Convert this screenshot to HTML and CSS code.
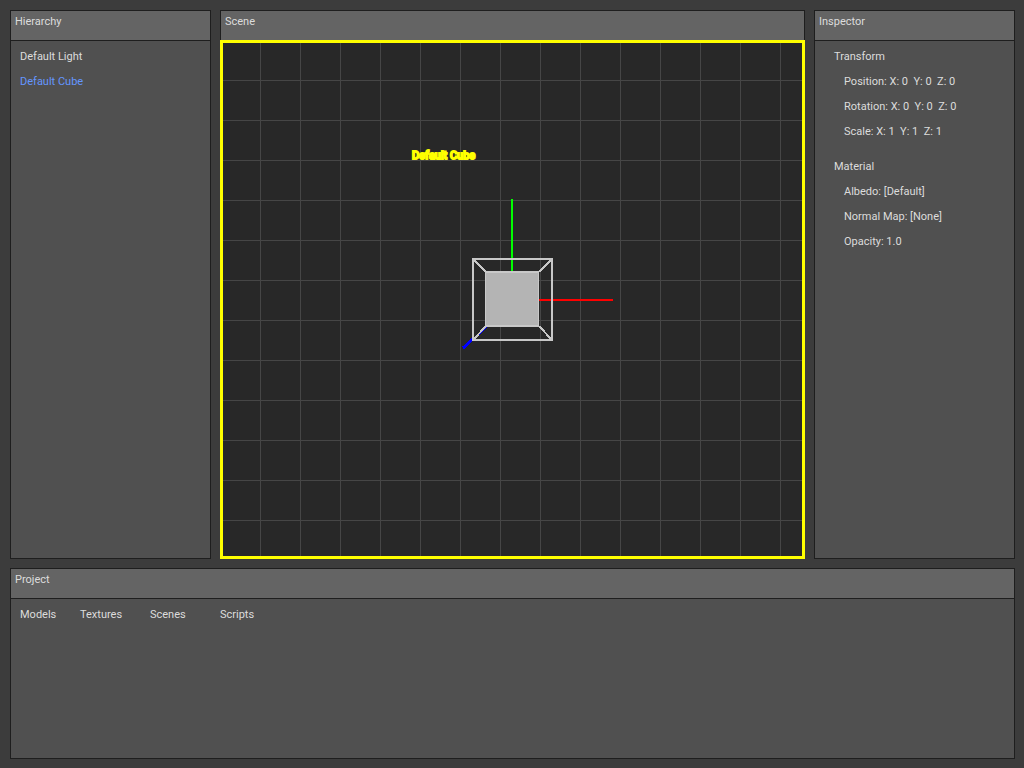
FILE: index.html
```html
<!DOCTYPE html>
<html lang="en">
<head>
<meta charset="utf-8">
<title>Scene Editor</title>
<link rel="stylesheet" href="styles.css">
</head>
<body>
<main class="editor">
  <section class="panel" aria-labelledby="hierarchy-title">
    <h2 class="panel-title" id="hierarchy-title">Hierarchy</h2>
    <ul class="item-list">
      <li>Default Light</li>
      <li class="selected">Default Cube</li>
    </ul>
  </section>
  <section class="panel scene" aria-labelledby="scene-title">
    <h2 class="panel-title" id="scene-title">Scene</h2>
    <div class="viewport">
      <svg class="model" width="241" height="319" viewBox="-120 -160 241 319" role="img" aria-label="Default Cube">
        <text class="model-label" x="-100" y="-141">Default Cube</text>
        <g shape-rendering="crispEdges">
          <path class="axis-y" d="M0-101V-28"/>
          <path class="axis-x" d="M27 0H101"/>
          <path class="axis-z" d="M-49 48L-39 39"/>
          <path class="axis-z-inner" d="M-39 40L-26 27"/>
          <path class="wire" d="M-39-41H40V40H-39Z"/>
          <path class="wire diagonal" d="M-39-41L-26-28M40-41L27-28M-39 40L-26 26M40 40L27 26"/>
          <path class="face" d="M-27-29H27V27H-27Z"/>
          <path class="wire" d="M-27-28H27M-27 26H27"/>
          <path class="edge" d="M-27-29H-26V27H-27ZM26-29H27V27H26Z"/>
        </g>
      </svg>
    </div>
  </section>
  <section class="panel" aria-labelledby="inspector-title">
    <h2 class="panel-title" id="inspector-title">Inspector</h2>
    <div class="inspector">
      <h3>Transform</h3>
      <ul>
        <li>Position: X: 0  Y: 0  Z: 0</li>
        <li>Rotation: X: 0  Y: 0  Z: 0</li>
        <li>Scale: X: 1  Y: 1  Z: 1</li>
      </ul>
      <h3>Material</h3>
      <ul>
        <li>Albedo: [Default]</li>
        <li>Normal Map: [None]</li>
        <li>Opacity: 1.0</li>
      </ul>
    </div>
  </section>
  <section class="panel project" aria-labelledby="project-title">
    <h2 class="panel-title" id="project-title">Project</h2>
    <ul class="folders">
      <li>Models</li>
      <li>Textures</li>
      <li>Scenes</li>
      <li>Scripts</li>
    </ul>
  </section>
</main>
</body>
</html>
```
FILE: styles.css
```css
* { box-sizing: border-box; }
body, h2, h3, ul { margin: 0; padding: 0; font-size: inherit; font-weight: 400; }
ul { list-style: none; }
body {
  background: #3c3c3c;
  color: #dcdcdc;
  font: 11px/20px Roboto, "Liberation Sans", sans-serif;
}
.editor {
  display: grid;
  grid-template-columns: 201px minmax(0, 1fr) 201px;
  grid-template-rows: minmax(0, 1fr) 191px;
  gap: 9px;
  min-height: 100vh;
  padding: 10px 9px 9px 10px;
}
.panel {
  display: flex;
  flex-direction: column;
  background: #505050;
  border: 1px solid #1e1e1e;
}
.panel-title {
  height: 30px;
  padding: 1px 4px 0;
  background: #646464;
  border-bottom: 1px solid #1e1e1e;
}
.item-list { padding: 6px 9px; }
.item-list li, .inspector li, .inspector h3 { margin-bottom: 5px; }
.selected { color: #6496ff; }
.scene { border: 0; }
.scene .panel-title {
  border: 1px solid #1e1e1e;
  border-bottom: 0;
}
.viewport {
  flex: 1;
  display: grid;
  place-items: center;
  border: 3px solid #ff0;
  background-color: #282828;
  background-image:
    linear-gradient(to right, #464646 1px, transparent 1px),
    linear-gradient(to bottom, #464646 1px, transparent 1px);
  background-size: 40px 40px;
  background-position: 37px 37px;
}
.model { display: block; }
.model-label { fill: #ff0; stroke: #ff0; stroke-width: 2px; }
.axis-x, .axis-y, .axis-z, .axis-z-inner, .wire { fill: none; stroke-width: 2px; }
.axis-x { stroke: #f00; }
.axis-y { stroke: #0f0; }
.axis-z { stroke: #00f; stroke-width: 3px; }
.axis-z-inner { stroke: #00f; }
.wire { stroke: #c8c8c8; }
.face { fill: #b4b4b4; }
.edge { fill: #c8c8c8; }
.inspector { padding: 6px 19px; }
.inspector ul { padding-left: 10px; margin-bottom: 15px; }
.inspector li { white-space: pre; }
.project { grid-column: 1 / -1; }
.folders {
  display: grid;
  grid-template-columns: 60px 70px 70px auto;
  padding: 6px 9px;
}
```
